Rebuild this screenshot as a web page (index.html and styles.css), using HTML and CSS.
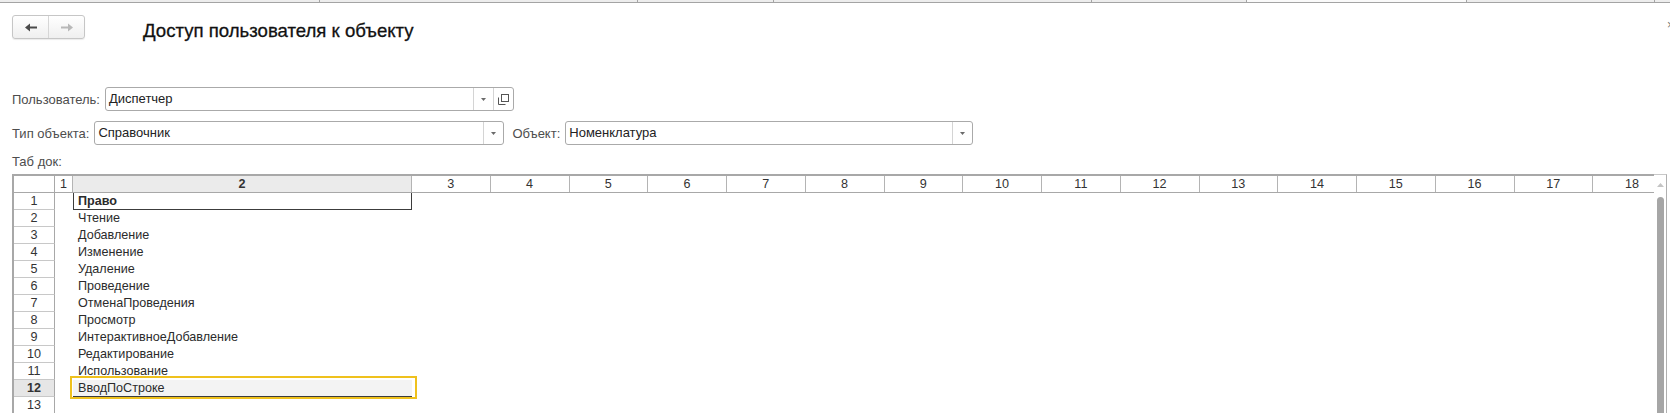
FILE: index.html
```html
<!DOCTYPE html>
<html lang="ru">
<head>
    <meta charset="UTF-8">
    <title>Доступ пользователя к объекту</title>
    <link rel="stylesheet" href="styles.css">
</head>
<body>
    <!-- Open windows strip -->
    <div class="tabs">
        <span class="tab"></span><span class="tab"></span><span class="tab"></span><span class="tab"></span>
        <span class="tab"></span><span class="tab tab-active"></span><span class="tab"></span><span class="tab tab-last"></span>
    </div>

    <div class="head">
        <div class="nav">
            <button class="nav-btn">
                <svg width="12" height="9" viewBox="0 0 12 9"><path d="M0 4.5 L5 0.5 L5 3.5 L12 3.5 L12 5.5 L5 5.5 L5 8.5 Z" fill="#4a4a4a"/></svg>
            </button>
            <button class="nav-btn">
                <svg width="12" height="9" viewBox="0 0 12 9"><path d="M12 4.5 L7 0.5 L7 3.5 L0 3.5 L0 5.5 L7 5.5 L7 8.5 Z" fill="#b8b8b8"/></svg>
            </button>
        </div>
        <h1 class="title">Доступ пользователя к объекту</h1>
        <span class="close">×</span>
    </div>

    <div class="form">
        <div class="field-row">
            <label class="lbl">Пользователь:</label>
            <div class="input input-user">
                <span class="val">Диспетчер</span>
                <span class="ibtn"><svg width="5" height="3" viewBox="0 0 5 3"><path d="M0 0 H5 L2.5 3 Z" fill="#6a6a6a"/></svg></span>
                <span class="ibtn">
                    <svg width="11" height="11" viewBox="0 0 11 11"><rect x="3.5" y="0.5" width="7" height="7" fill="none" stroke="#555"/><path d="M0.5 3.5 V10.5 H7.5" fill="none" stroke="#555"/></svg>
                </span>
            </div>
        </div>
        <div class="field-row">
            <label class="lbl">Тип объекта:</label>
            <div class="input input-type">
                <span class="val">Справочник</span>
                <span class="ibtn"><svg width="5" height="3" viewBox="0 0 5 3"><path d="M0 0 H5 L2.5 3 Z" fill="#6a6a6a"/></svg></span>
            </div>
            <label class="lbl lbl-obj">Объект:</label>
            <div class="input input-obj">
                <span class="val">Номенклатура</span>
                <span class="ibtn"><svg width="5" height="3" viewBox="0 0 5 3"><path d="M0 0 H5 L2.5 3 Z" fill="#6a6a6a"/></svg></span>
            </div>
        </div>
    </div>

    <div class="doc-label">Таб док:</div>

    <!-- Spreadsheet document -->
    <div class="sheet">
        <div class="grid">
            <div class="row hrow">
                <span class="hc corner"></span>
                <span class="hc col1">1</span>
                <span class="hc col2 hc-sel">2</span>
                <span class="hc col">3</span>
                <span class="hc col">4</span>
                <span class="hc col">5</span>
                <span class="hc col">6</span>
                <span class="hc col">7</span>
                <span class="hc col">8</span>
                <span class="hc col">9</span>
                <span class="hc col">10</span>
                <span class="hc col">11</span>
                <span class="hc col">12</span>
                <span class="hc col">13</span>
                <span class="hc col">14</span>
                <span class="hc col">15</span>
                <span class="hc col">16</span>
                <span class="hc col">17</span>
                <span class="hc col">18</span>
            </div>
            <div class="row"><span class="rn">1</span><span class="c1"></span><span class="c2 c2-head">Право</span></div>
            <div class="row"><span class="rn">2</span><span class="c1"></span><span class="c2">Чтение</span></div>
            <div class="row"><span class="rn">3</span><span class="c1"></span><span class="c2">Добавление</span></div>
            <div class="row"><span class="rn">4</span><span class="c1"></span><span class="c2">Изменение</span></div>
            <div class="row"><span class="rn">5</span><span class="c1"></span><span class="c2">Удаление</span></div>
            <div class="row"><span class="rn">6</span><span class="c1"></span><span class="c2">Проведение</span></div>
            <div class="row"><span class="rn">7</span><span class="c1"></span><span class="c2">ОтменаПроведения</span></div>
            <div class="row"><span class="rn">8</span><span class="c1"></span><span class="c2">Просмотр</span></div>
            <div class="row"><span class="rn">9</span><span class="c1"></span><span class="c2">ИнтерактивноеДобавление</span></div>
            <div class="row"><span class="rn">10</span><span class="c1"></span><span class="c2">Редактирование</span></div>
            <div class="row"><span class="rn">11</span><span class="c1"></span><span class="c2"><span class="ul">Использование</span></span></div>
            <div class="row"><span class="rn rn-sel">12</span><span class="c1"></span><span class="c2 c2-sel">ВводПоСтроке</span></div>
            <div class="row"><span class="rn">13</span><span class="c1"></span><span class="c2"></span></div>
            <div class="row"><span class="rn">14</span><span class="c1"></span><span class="c2"></span></div>
        </div>
        <div class="vscroll">
            <svg class="up" width="7" height="4" viewBox="0 0 7 4"><path d="M0 4 L3.5 0 L7 4 Z" fill="#c4c4c4"/></svg>
            <div class="thumb"></div>
        </div>
    </div>
</body>
</html>
```

FILE: styles.css
```css
/* General */
* {
    box-sizing: border-box;
}

html, body {
    height: 413px;
    overflow: hidden;
}

body {
    margin: 0;
    font-family: "Liberation Sans", Arial, sans-serif;
    font-size: 13px;
    color: #333;
    background-color: #fff;
}

/* Open windows strip */
.tabs {
    display: grid;
    grid-template-columns: 320px 318px 136px 318px 155px 220px 188px 1fr;
    height: 3px;
    border-bottom: 1px solid #a4a4a4;
}

.tab {
    background-color: #ededed;
    border-right: 1px solid #a4a4a4;
}

.tab-active {
    background-color: #fafafa;
}

.tab-last {
    border-right: none;
}

/* Form header */
.head {
    display: flex;
    align-items: flex-start;
    padding-left: 12px;
    margin-top: 12px;
}

.nav {
    display: flex;
    width: 73px;
    height: 24px;
    border: 1px solid #c6c6c6;
    border-radius: 3px;
    background: linear-gradient(#ffffff, #efefef);
    box-shadow: 0 1px 1px rgba(0, 0, 0, 0.08);
}

.nav-btn {
    flex: 1;
    display: flex;
    align-items: center;
    justify-content: center;
    padding: 0;
    border: none;
    background: none;
}

.nav-btn + .nav-btn {
    border-left: 1px solid #d6d6d6;
}

.title {
    margin: 5px 0 0 58px;
    font-size: 18.6px;
    font-weight: normal;
    line-height: 21px;
    color: #111;
    -webkit-text-stroke: 0.3px #111;
}

.close {
    margin-left: auto;
    margin-right: -4px;
    margin-top: 3px;
    font-size: 12px;
    color: #777;
}

/* Fields */
.form {
    padding: 0 12px;
    margin-top: 46px;
}

.field-row {
    display: flex;
    align-items: center;
    height: 24px;
    margin-bottom: 10px;
}

.lbl {
    color: #4d4d4d;
    margin-right: 5px;
}

.lbl-obj {
    margin-left: 8px;
}

.input {
    display: flex;
    height: 24px;
    border: 1px solid #aaa;
    border-radius: 3px;
    background-color: #fff;
}

.input-user {
    width: 409px;
}

.input-type {
    width: 410px;
}

.input-obj {
    width: 408px;
}

.val {
    flex: 1;
    padding-left: 3px;
    line-height: 22px;
    color: #222;
}

.ibtn {
    display: flex;
    align-items: center;
    justify-content: center;
    width: 20px;
    border-left: 1px solid #d4d4d4;
}

.doc-label {
    padding-left: 12px;
    margin-top: 0;
    line-height: 14px;
    color: #4d4d4d;
}

/* Spreadsheet */
.sheet {
    display: flex;
    margin: 5px 3px 0 12px;
    height: 300px;
    border-left: 2px solid #a8a8a8;
    font-size: 12.6px;
}

.grid {
    flex: 1;
    overflow: hidden;
}

.row {
    display: flex;
    height: 17px;
    line-height: 16px;
    white-space: nowrap;
}

.hrow {
    height: 19px;
    border-top: 2px solid #a8a8a8;
    border-bottom: 1px solid #a8a8a8;
}

.hc {
    flex: none;
    text-align: center;
    border-right: 1px solid #b4b4b4;
}

.corner,
.rn {
    flex: none;
    width: 41px;
    text-align: center;
    border-right: 1px solid #a8a8a8;
}

.col1,
.c1 {
    flex: none;
    width: 18px;
}

.col2,
.c2 {
    flex: none;
    width: 339px;
}

.col {
    width: 78.75px;
}

.hc-sel {
    background-color: #ebebeb;
    font-weight: bold;
}

.rn {
    border-bottom: 1px solid #c8c8c8;
}

.rn-sel {
    background-color: #e6e6e6;
    font-weight: bold;
}

.c2 {
    padding-left: 5px;
    color: #2b2b2b;
}

.c2-head {
    font-weight: bold;
    border: 1px solid #3c3c3c;
    border-top: none;
    padding-left: 4px;
}

.ul {
    text-decoration: underline;
}

.c2-sel {
    position: relative;
    background-color: #f3f3f3;
    border-bottom: 1px solid #3c3c3c;
}

/* Current cell frame */
.c2-sel::after {
    content: "";
    position: absolute;
    top: -4px;
    left: -3px;
    right: -5px;
    bottom: -3px;
    border: 2px solid #efc11d;
}

.vscroll {
    flex: none;
    position: relative;
    width: 13px;
    border-top: 1px solid #c8c8c8;
    border-right: 1px solid #b0b0b0;
}

.up {
    display: block;
    margin: 8px 0 0 3px;
}

.thumb {
    width: 7px;
    height: 260px;
    margin: 10px 0 0 3px;
    border-radius: 4px;
    background-color: #a6a6a6;
}
```
